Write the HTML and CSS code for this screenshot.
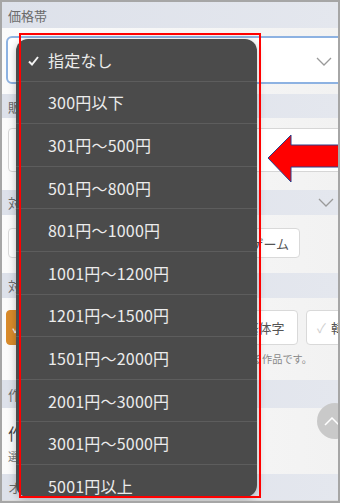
FILE: index.html
```html
<!DOCTYPE html>
<html lang="ja">
<head>
    <meta charset="UTF-8">
    <meta name="viewport" content="width=device-width, initial-scale=1.0">
    <title>価格帯</title>
    <link rel="stylesheet" href="styles.css">
</head>
<body>
    <div class="frame">
        <div class="sec-head h26">価格帯</div>
        <div class="block price">
            <div class="select">
                <span class="select-value">指定なし</span>
                <svg class="chev" width="16" height="9" viewBox="0 0 16 9"><polyline points="1,1 8,8 15,1" fill="none" stroke="#9a9a9a" stroke-width="1.3"/></svg>
            </div>
        </div>

        <div class="sec-head h24">販売者</div>
        <div class="block seller">
            <div class="input"></div>
        </div>

        <div class="sec-head h25 with-chev">
            <span>対応OS</span>
            <svg class="chev" width="16" height="9" viewBox="0 0 16 9"><polyline points="1,1 8,8 15,1" fill="none" stroke="#9a9a9a" stroke-width="1.3"/></svg>
        </div>
        <div class="block os">
            <div class="btn-row">
                <span class="btn">Windows</span>
                <span class="btn">スマホ</span>
                <span class="btn">ブラウザゲーム</span>
            </div>
        </div>

        <div class="sec-head h25">対応言語</div>
        <div class="block lang">
            <div class="lang-row">
                <span class="btn on">✓ 日本語</span>
                <span class="btn">✓ 英語</span>
                <span class="btn">✓ 簡体字</span>
                <span class="btn">✓ 繁体字</span>
                <span class="btn left"><span class="tick">✓</span>韓国語</span>
            </div>
            <p class="note">※チェックを入れた言語のいずれかに対応している作品です。</p>
        </div>

        <div class="sec-head h28">作品形式</div>
        <div class="block work">
            <div class="work-title">作品形式を選ぶ</div>
            <div class="work-sub">選択した形式の作品のみ表示します</div>
        </div>

        <div class="sec-head h26">オプション</div>
        <div class="grid-lines">
            <span></span><span></span><span></span><span></span><span></span>
            <span></span><span></span><span></span><span></span><span></span>
        </div>

        <!-- 価格帯の選択メニュー (iOS ピッカー) -->
        <ul class="picker">
            <li class="checked">
                <svg class="check" width="11" height="10" viewBox="0 0 11 10"><polyline points="1,5.5 4,8.5 10,1" fill="none" stroke="#f2f2f2" stroke-width="2"/></svg>
                指定なし
            </li>
            <li>300円以下</li>
            <li>301円～500円</li>
            <li>501円～800円</li>
            <li>801円～1000円</li>
            <li>1001円～1200円</li>
            <li>1201円～1500円</li>
            <li>1501円～2000円</li>
            <li>2001円～3000円</li>
            <li>3001円～5000円</li>
            <li>5001円以上</li>
        </ul>

        <div class="highlight"></div>

        <svg class="arrow" width="76" height="52" viewBox="0 0 76 52">
            <polygon points="2,25 25,2 25,12 78,12 78,34 25,34 25,49" fill="#ff0000" stroke="#2a3f8a" stroke-width="1"/>
        </svg>

        <div class="to-top">
            <svg width="16" height="9" viewBox="0 0 16 9"><polyline points="1,8 8,1 15,8" fill="none" stroke="#ffffff" stroke-width="1.5"/></svg>
        </div>
    </div>
</body>
</html>
```

FILE: styles.css
```css
body {
    margin: 0;
    font-family: "Noto Sans CJK JP", "Noto Sans", sans-serif;
    background: #ffffff;
}
.frame {
    position: relative;
    width: 340px;
    height: 503px;
    box-sizing: border-box;
    border: 2px solid #a6a6a6;
    overflow: hidden;
    background: linear-gradient(to right, #fbfbfb, #f2f2f2);
}
.sec-head {
    display: flex;
    align-items: center;
    padding-left: 6px;
    font-size: 13px;
    color: #6b6b6b;
    background: linear-gradient(to right, #dde1ea, #e4e7ee);
}
.sec-head.with-chev {
    justify-content: space-between;
    padding-right: 4px;
}
.h24 { height: 24px; }
.h25 { height: 25px; }
.h26 { height: 26px; }
.h28 { height: 28px; }

.block.price { padding: 8px 0 10px 4px; }
.select {
    height: 48px;
    box-sizing: border-box;
    margin-right: -8px;
    border: 2px solid #8db2e2;
    border-radius: 6px;
    background: #ffffff;
    display: flex;
    align-items: center;
    justify-content: space-between;
    padding: 0 12px 0 14px;
    font-size: 15px;
    color: #333;
}
.select .chev { margin-top: 2px; }

.block.seller { padding: 10px 0 18px 6px; }
.input {
    height: 44px;
    box-sizing: border-box;
    margin-right: -8px;
    border: 1px solid #d6d6d6;
    border-radius: 4px;
    background: #ffffff;
}

.block.os { padding: 13px 0 15px 6px; }
.btn-row {
    display: flex;
    gap: 6px;
    margin-right: 38px;
}
.btn {
    display: flex;
    align-items: center;
    justify-content: center;
    box-sizing: border-box;
    height: 30px;
    padding: 0 10px;
    border: 1px solid #d9d9d9;
    border-radius: 4px;
    background: #ffffff;
    font-size: 13px;
    color: #555;
    white-space: nowrap;
}
.btn.left { justify-content: flex-start; }
.btn-row .btn { flex: 1; }
.btn-row .btn:last-child { flex: none; }

.block.lang { padding: 12px 0 0 4px; height: 82px; box-sizing: border-box; }
.lang-row {
    display: grid;
    grid-template-columns: 64px 50px 76px 78px 90px;
    gap: 8px;
}
.lang-row .btn { height: 35px; }
.lang-row .btn.on {
    background: #d98b2b;
    border-color: #d98b2b;
    color: #ffffff;
}
.tick { color: #cfcfcf; margin-right: 5px; }
.note {
    margin: 6px 0 0 22px;
    font-size: 10.2px;
    color: #888;
    white-space: nowrap;
}

.block.work { padding: 14px 0 0 6px; height: 66px; box-sizing: border-box; }
.work-title { font-size: 16px; color: #444; line-height: 22px; }
.work-sub { font-size: 11px; color: #777; margin-top: 4px; }

.grid-lines {
    display: flex;
    height: 4px;
    border-top: 1px solid #dcdcdc;
}
.grid-lines span {
    flex: 1;
    border-right: 1px solid #dcdcdc;
}

.picker {
    position: absolute;
    left: 14px;
    top: 37px;
    width: 241px;
    height: 458px;
    margin: 0;
    padding: 0;
    list-style: none;
    background: #4b4b4b;
    border-radius: 12px;
    overflow: hidden;
    box-shadow: 0 2px 8px rgba(0,0,0,0.25);
}
.picker li {
    position: relative;
    height: 42.6px;
    box-sizing: border-box;
    display: flex;
    align-items: center;
    padding-left: 32px;
    border-bottom: 1px solid #5d5d5d;
    font-size: 16px;
    color: #ececec;
    letter-spacing: 0.2px;
}
.picker .check {
    position: absolute;
    left: 12px;
    top: 17px;
}

.highlight {
    position: absolute;
    left: 17px;
    top: 31px;
    width: 242px;
    height: 465px;
    box-sizing: border-box;
    border: 2px solid #ff0000;
}

.arrow {
    position: absolute;
    left: 264px;
    top: 131px;
}

.to-top {
    position: absolute;
    left: 315px;
    top: 401px;
    width: 36px;
    height: 36px;
    border-radius: 50%;
    background: #c9c9c9;
    display: flex;
    align-items: center;
    justify-content: center;
    padding-right: 6px;
    box-sizing: border-box;
}
```
